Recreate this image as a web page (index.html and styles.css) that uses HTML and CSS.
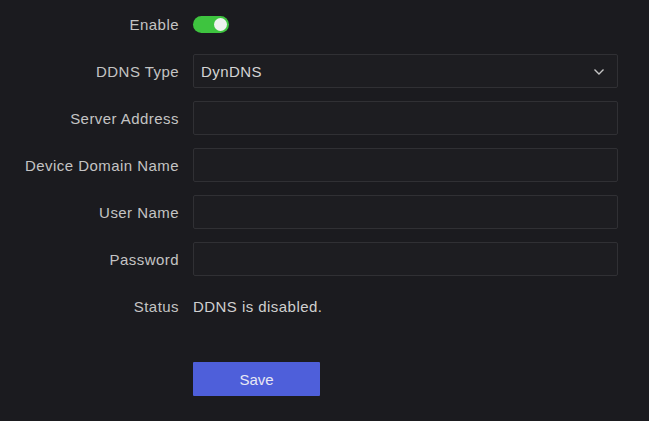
FILE: index.html
```html
<!DOCTYPE html>
<html lang="en">
<head>
    <meta charset="UTF-8">
    <meta name="viewport" content="width=device-width, initial-scale=1.0">
    <title>DDNS</title>
    <link rel="stylesheet" href="styles.css">
</head>
<body>
    <form class="ddns-form">
        <label class="field-label">Enable</label>
        <div class="field">
            <span class="switch"><span class="knob"></span></span>
        </div>

        <label class="field-label">DDNS Type</label>
        <div class="field">
            <div class="select">
                <span>DynDNS</span>
                <svg width="12" height="8" viewBox="0 0 12 8"><path d="M1.5 1.5 L6 6 L10.5 1.5" fill="none" stroke="#c4c4c4" stroke-width="1.4"/></svg>
            </div>
        </div>

        <label class="field-label">Server Address</label>
        <div class="field"><input class="text-input" type="text"></div>

        <label class="field-label">Device Domain Name</label>
        <div class="field"><input class="text-input" type="text"></div>

        <label class="field-label">User Name</label>
        <div class="field"><input class="text-input" type="text"></div>

        <label class="field-label">Password</label>
        <div class="field"><input class="text-input" type="password"></div>

        <label class="field-label">Status</label>
        <div class="field status">DDNS is disabled.</div>

        <div></div>
        <div class="actions"><button class="save-btn" type="button">Save</button></div>
    </form>
</body>
</html>
```

FILE: styles.css
```css
body { margin: 0; background: #1b1b1f; font-family: "Liberation Sans", Arial, sans-serif; font-size: 15px; letter-spacing: 0.45px; color: #c9c9c9; }
.ddns-form { display: grid; grid-template-columns: 179px 425px; column-gap: 14px; row-gap: 13px; padding-top: 7px; }
.field-label { display: flex; align-items: center; justify-content: flex-end; height: 34px; padding-top: 1px; box-sizing: border-box; color: #c4c4c4; white-space: nowrap; }
.field { display: flex; align-items: center; height: 34px; }
.switch { position: relative; width: 36px; height: 17px; border-radius: 9px; background: #3ec43f; }
.knob { position: absolute; right: 2px; top: 2px; width: 13px; height: 13px; border-radius: 50%; background: #eef2ee; }
.select, .text-input { box-sizing: border-box; width: 425px; height: 34px; background: #1d1d21; border: 1px solid #303034; border-radius: 2px; }
.select { display: flex; align-items: center; justify-content: space-between; padding: 1px 12px 0 7px; color: #d4d4d4; }
.text-input { padding: 0 7px; color: #d4d4d4; font: inherit; outline: none; }
.status { color: #d0d0d0; padding-top: 1px; box-sizing: border-box; }
.actions { margin-top: 26px; }
.save-btn { width: 127px; height: 34px; border: none; border-radius: 1px; background: #4e5fda; color: #e8e8f4; font: inherit; cursor: pointer; }
```
